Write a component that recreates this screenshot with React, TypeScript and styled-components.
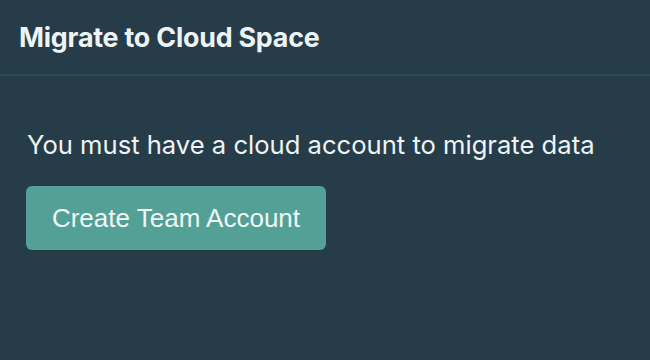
import styled, { createGlobalStyle } from 'styled-components';

const Global = createGlobalStyle`
  html, body {
    margin: 0;
    padding: 0;
    background: #263d49;
  }
`;

const Page = styled.div`
  width: 650px;
  height: 360px;
  background: #263d49;
  font-family: Inter, 'Noto Sans', sans-serif;
  color: #eef4f5;
`;

const Header = styled.div`
  height: 74px;
  display: flex;
  align-items: center;
  padding: 0 19px;
  border-bottom: 2px solid #2c4752;
  .title {
    font-size: 26.8px;
    font-weight: 700;
    letter-spacing: -0.2px;
  }
`;

const Body = styled.div`
  padding: 54px 26px 0;
  display: flex;
  flex-direction: column;
  align-items: flex-start;
  gap: 26px;
`;

const Message = styled.p`
  margin: 0 0 0 1px;
  font-size: 25.6px;
  line-height: 30px;
  font-weight: 400;
`;

const Button = styled.button`
  width: 300px;
  height: 64px;
  border: none;
  border-radius: 6px;
  background: #53a096;
  color: #f1f7f6;
  font-family: 'Liberation Sans', Arial, sans-serif;
  font-size: 26px;
  cursor: pointer;
`;

export default function App() {
  return (
    <Page>
      <Global />
      <Header>
        <div className="title">Migrate to Cloud Space</div>
      </Header>
      <Body>
        <Message>You must have a cloud account to migrate data</Message>
        <Button>Create Team Account</Button>
      </Body>
    </Page>
  );
}
